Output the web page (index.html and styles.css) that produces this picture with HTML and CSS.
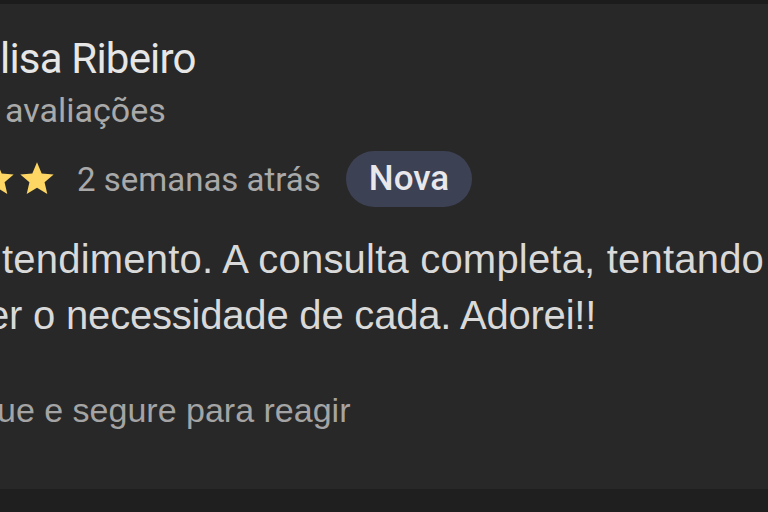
FILE: index.html
```html
<!DOCTYPE html>
<html lang="pt-BR">
<head>
  <meta charset="UTF-8" />
  <meta name="viewport" content="width=device-width, initial-scale=1.0"/>
  <title>Avaliação</title>
  <link rel="stylesheet" href="styles.css">
</head>
<body>
  <div class="topbar"></div>

  <div class="review-card">
    <div class="author">lisa Ribeiro</div>
    <div class="author-meta">avaliações</div>

    <div class="rating-row">
      <div class="stars">
        <svg class="star" viewBox="0 0 24 24"><path d="M12 17.27L18.18 21l-1.64-7.03L22 9.24l-7.19-.61L12 2 9.19 8.63 2 9.24l5.46 4.73L5.82 21z"/></svg>
        <svg class="star" viewBox="0 0 24 24"><path d="M12 17.27L18.18 21l-1.64-7.03L22 9.24l-7.19-.61L12 2 9.19 8.63 2 9.24l5.46 4.73L5.82 21z"/></svg>
      </div>
      <span class="when">2 semanas atrás</span>
      <span class="badge">Nova</span>
    </div>

    <p class="review-text">
      <span class="line">tendimento. A consulta completa, tentando</span>
      <span class="line second">er o necessidade de cada. Adorei!!</span>
    </p>

    <div class="hint">ue e segure para reagir</div>
  </div>

  <div class="bottombar"></div>
</body>
</html>
```

FILE: styles.css
```css
body {
  margin: 0;
  height: 512px;
  overflow: hidden;
  background-color: #1e1e1e;
  font-family: Roboto, 'Noto Sans', sans-serif;
}
.topbar {
  height: 4px;
  background-color: #1c1c1c;
}
.review-card {
  background-color: #282828;
  height: 485px;
  box-sizing: border-box;
  padding-top: 31px;
  overflow: hidden;
}
.author {
  color: #e6e6e6;
  font-size: 42px;
  line-height: 48px;
  letter-spacing: -0.8px;
}
.author-meta {
  color: #a9a9a9;
  font-size: 34px;
  line-height: 40px;
  margin-left: 5px;
  margin-top: 7px;
}
.rating-row {
  display: flex;
  align-items: center;
  margin-top: 21px;
  height: 56px;
}
.stars {
  display: flex;
  margin-left: -23px;
}
.star {
  width: 40px;
  height: 40px;
  fill: #fdd663;
}
.when {
  color: #a9a9a9;
  font-size: 33px;
  margin-left: 20px;
}
.badge {
  background-color: #3d4154;
  color: #e8e8ec;
  font-size: 35px;
  font-weight: 500;
  height: 56px;
  line-height: 56px;
  padding: 0 23px;
  border-radius: 28px;
  margin-left: 25px;
}
.review-text {
  margin: 24px 0 0;
  color: #d9d9d9;
  font-family: 'Liberation Sans', sans-serif;
  font-size: 40px;
  line-height: 56px;
  letter-spacing: 0.2px;
}
.line {
  display: block;
  white-space: nowrap;
  margin-left: 2px;
}
.line.second {
  margin-left: -13px;
  letter-spacing: -0.2px;
}
.hint {
  margin: 47px 0 0 -3px;
  color: #a4a4a4;
  font-family: 'Liberation Sans', sans-serif;
  font-size: 34px;
  line-height: 40px;
}
.bottombar {
  height: 23px;
  background-color: #1f1f1f;
}
```
